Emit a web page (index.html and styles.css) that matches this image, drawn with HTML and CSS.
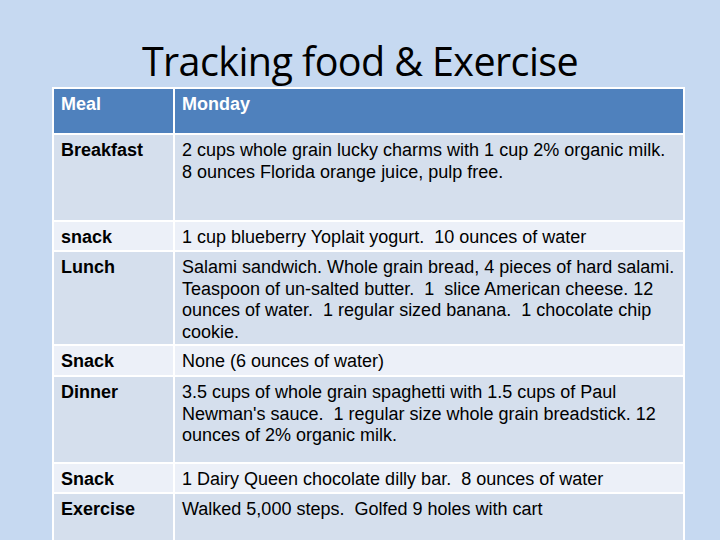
FILE: index.html
```html
<!DOCTYPE html>
<html>
<head>
<meta charset="utf-8">
<link rel="stylesheet" href="styles.css">
</head>
<body>
<div class="slide">
  <h1 class="title">Tracking food &amp; Exercise</h1>
  <table class="log">
    <colgroup><col class="c1"><col class="c2"></colgroup>
    <tr class="head r-head"><th>Meal</th><th>Monday</th></tr>
    <tr class="dark r-break"><td class="label">Breakfast</td><td>2 cups whole grain lucky charms with 1 cup 2% organic milk.<br>8 ounces Florida orange juice, pulp free.</td></tr>
    <tr class="light r-one"><td class="label">snack</td><td>1 cup blueberry Yoplait yogurt.&nbsp; 10 ounces of water</td></tr>
    <tr class="dark r-lunch"><td class="label">Lunch</td><td>Salami sandwich. Whole grain bread, 4 pieces of hard salami.<br>Teaspoon of un-salted butter.&nbsp; 1&nbsp; slice American cheese. 12<br>ounces of water.&nbsp; 1 regular sized banana.&nbsp; 1 chocolate chip<br>cookie.</td></tr>
    <tr class="light r-one2"><td class="label">Snack</td><td>None (6 ounces of water)</td></tr>
    <tr class="dark r-dinner"><td class="label">Dinner</td><td>3.5 cups of whole grain spaghetti with 1.5 cups of Paul<br>Newman's sauce.&nbsp; 1 regular size whole grain breadstick. 12<br>ounces of 2% organic milk.</td></tr>
    <tr class="light r-one3"><td class="label">Snack</td><td>1 Dairy Queen chocolate dilly bar.&nbsp; 8 ounces of water</td></tr>
    <tr class="dark r-ex"><td class="label">Exercise</td><td>Walked 5,000 steps.&nbsp; Golfed 9 holes with cart</td></tr>
  </table>
</div>
</body>
</html>
```
FILE: styles.css
```css
html, body {
  margin: 0;
  padding: 0;
  background: #c6d9f1;
}
.slide {
  width: 720px;
  height: 540px;
  overflow: hidden;
  background: #c6d9f1;
  padding-top: 35px;
  box-sizing: border-box;
}
.title {
  margin: 0;
  font-family: "Open Sans", sans-serif;
  font-weight: 400;
  font-size: 39.5px;
  line-height: 52px;
  letter-spacing: -0.6px;
  text-align: center;
  color: #000;
}
.log {
  margin: 0 0 0 52px;
  width: 633px;
  border-collapse: collapse;
  table-layout: fixed;
  font-family: "Liberation Sans", Arial, sans-serif;
  font-size: 18px;
  line-height: 21.5px;
  color: #000;
}
.c1 { width: 121px; }
.log th, .log td {
  border: 2px solid #fff;
  padding: 5px 4px 1px 7px;
  vertical-align: top;
  text-align: left;
  white-space: nowrap;
}
.log th {
  color: #fff;
  font-weight: bold;
}
.label { font-weight: bold; }
.head { background: #4f81bd; }
.dark { background: #d5dfed; }
.light { background: #ecf0f8; }
.r-head { height: 46px; }
.r-break { height: 87px; }
.r-one { height: 30px; }
.r-lunch { height: 92px; }
.r-one2 { height: 31px; }
.r-dinner { height: 87px; }
.r-one3 { height: 29px; }
.r-ex { height: 60px; }
```
